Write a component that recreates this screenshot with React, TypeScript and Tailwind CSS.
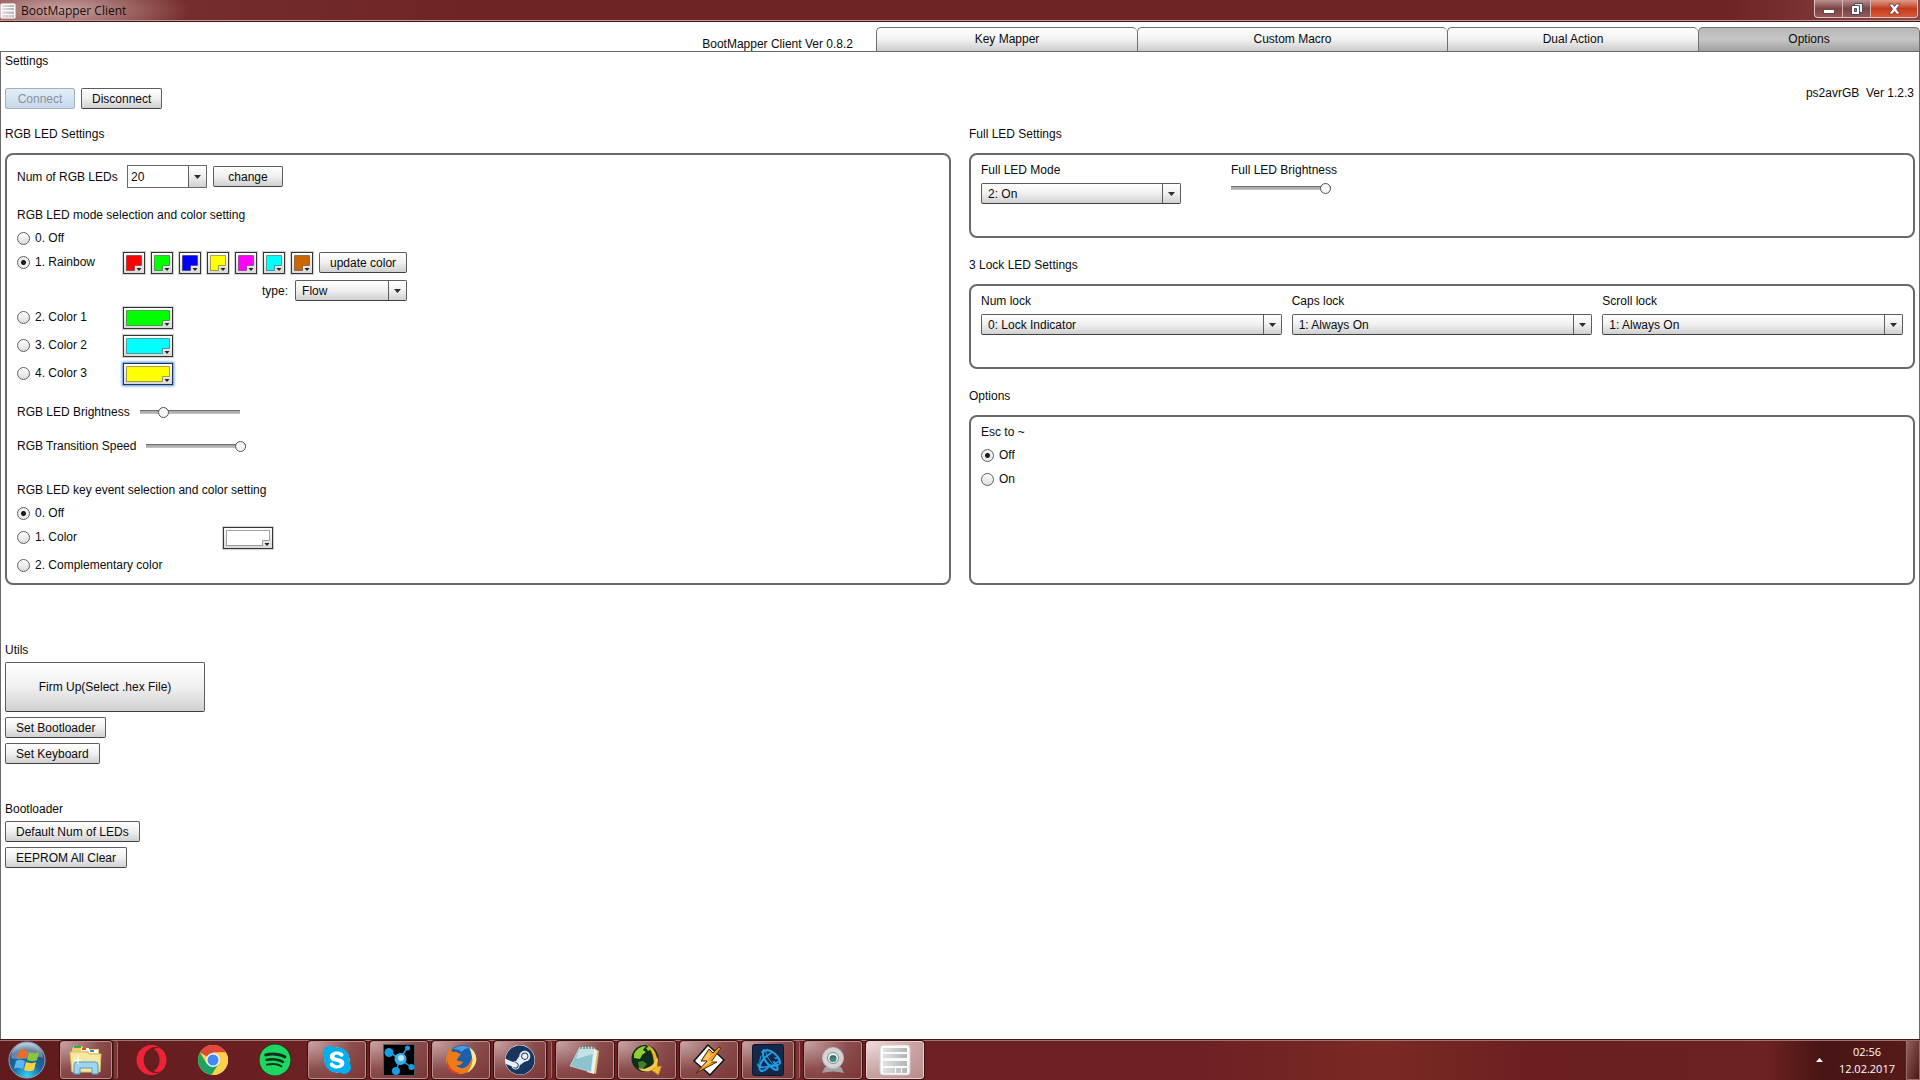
import React from "react"
import { FaOpera, FaSkype, FaSpotify, FaSteam } from "react-icons/fa"

const buttonClass =
  "h-[21px] min-w-[70px] px-[10px] rounded-[2px] border border-[#5c5d5e] border-b-[#3f3f3f] bg-linear-to-b from-white via-[#f0f0f0] to-[#d0d0d0] text-center disabled:border-[#a4b0bd] disabled:from-[#e4edf7] disabled:via-[#d6e4f3] disabled:to-[#c5d8ee] disabled:text-[#8a9099]"

function Button({ children, disabled = false }: { children: React.ReactNode; disabled?: boolean }) {
  return (
    <button className={buttonClass} disabled={disabled}>
      {children}
    </button>
  )
}

function Arrow() {
  return (
    <svg width="7" height="4" viewBox="0 0 7 4">
      <path d="M0 0h7L3.5 4z" fill="#2e2e2e" />
    </svg>
  )
}

function Select({ id, options, plain = false }: { id: string; options: string[]; plain?: boolean }) {
  return (
    <div
      className={
        plain
          ? "relative h-[23px] w-20 border border-[#696969] bg-white"
          : "relative h-[21px] w-full rounded-[2px] border border-[#5c5d5e] border-b-[#3f3f3f] bg-linear-to-b from-white via-[#f0f0f0] to-[#d0d0d0]"
      }
    >
      <select
        id={id}
        className={
          plain
            ? "block h-full w-full appearance-none bg-transparent pl-[3px] outline-none"
            : "block h-full w-full appearance-none bg-transparent pl-[6px] outline-none"
        }
      >
        {options.map((option) => (
          <option key={option}>{option}</option>
        ))}
      </select>
      <span className="pointer-events-none absolute inset-y-0 right-0 flex w-[18px] items-center justify-center border-l border-[#5c5d5e] bg-linear-to-b from-white via-[#f0f0f0] to-[#d0d0d0]">
        <Arrow />
      </span>
    </div>
  )
}

function Radio({ name, label, checked = false }: { name: string; label: string; checked?: boolean }) {
  return (
    <label className="flex h-5 items-center gap-[5px]">
      <input
        type="radio"
        name={name}
        defaultChecked={checked}
        className="h-[13px] w-[13px] appearance-none rounded-full border border-[#606162] bg-linear-to-b from-white to-[#dcdcdc] checked:bg-[radial-gradient(circle,#1c1c1c_2px,#eeeeee_3px)]"
      />
      {label}
    </label>
  )
}

function Slider({ id, value }: { id: string; value: number }) {
  return (
    <input
      id={id}
      type="range"
      defaultValue={value}
      className="h-4 w-[100px] appearance-none bg-[linear-gradient(#6f6f6f_1px,#a3a3a3_1px,#c4c4c4)] bg-[length:100%_4px] bg-center bg-no-repeat [&::-webkit-slider-thumb]:h-[11px] [&::-webkit-slider-thumb]:w-[11px] [&::-webkit-slider-thumb]:appearance-none [&::-webkit-slider-thumb]:rounded-full [&::-webkit-slider-thumb]:border [&::-webkit-slider-thumb]:border-[#555555] [&::-webkit-slider-thumb]:bg-[#f6f6f6]"
    />
  )
}

function Swatch({
  color,
  label,
  width = 50,
  focused = false,
}: {
  color: string
  label: string
  width?: number
  focused?: boolean
}) {
  const right = width - 3.5
  return (
    <button
      aria-label={label}
      className={focused ? "rounded-[1px] shadow-[0_0_0_1px_#8fb6e6,0_0_2px_2px_#a9c7ec]" : "shadow-[0_0_1px_1px_#d4d4d4]"}
    >
      <svg width={width} height="22" className="block">
        <defs>
          <linearGradient id="swatch-face" x2="0" y2="1">
            <stop offset="0" stopColor="#fff" />
            <stop offset="1" stopColor="#d8d8d8" />
          </linearGradient>
        </defs>
        <rect
          x=".5"
          y=".5"
          width={width - 1}
          height="21"
          fill="url(#swatch-face)"
          stroke={focused ? "#17325c" : "#333"}
        />
        <path d={`M3.5 3.5H${right}V13.5H${right - 7}V18.5H3.5z`} fill={color} />
        <path
          d={`M3.5 3.5H${right}V13.5H${right - 7}V18.5H3.5z`}
          fill="none"
          stroke="#000"
          strokeOpacity=".35"
        />
        <path d={`M${right - 5} 16h5l-2.5 3z`} fill="#222" />
      </svg>
    </button>
  )
}

function Section({ title, className = "", children }: { title: string; className?: string; children: React.ReactNode }) {
  return (
    <section className="flex flex-col gap-3">
      <h2>{title}</h2>
      <div className={`rounded-lg border-2 border-[#696969] px-[10px] ${className}`}>{children}</div>
    </section>
  )
}

const rainbow = ["#ff0000", "#00ff00", "#0000ff", "#ffff00", "#ff00ff", "#00ffff", "#cc6600"]

function RgbPanel() {
  return (
    <Section title="RGB LED Settings" className="pt-[10px] pb-2">
      <div className="flex items-center">
        <label htmlFor="led-count" className="w-[110px]">
          Num of RGB LEDs
        </label>
        <Select id="led-count" options={["20", "16", "12", "8"]} plain />
        <span className="ml-[6px] flex">
          <Button>change</Button>
        </span>
      </div>

      <h3 className="mt-5">RGB LED mode selection and color setting</h3>
      <div className="mt-[6px]">
        <Radio name="mode" label="0. Off" />
      </div>
      <div className="mt-1 grid w-fit grid-cols-[106px_auto] gap-y-[6px]">
        <Radio name="mode" label="1. Rainbow" checked />
        <div className="flex items-start gap-[6px]">
          {rainbow.map((color, i) => (
            <Swatch key={color} color={color} label={`Rainbow color ${i + 1}`} width={22} />
          ))}
          <Button>update color</Button>
        </div>
        <div className="col-start-2 flex items-center justify-end gap-[7px]">
          <label htmlFor="rainbow-type">type:</label>
          <div className="w-28">
            <Select id="rainbow-type" options={["Flow", "Fixed"]} />
          </div>
        </div>
        <Radio name="mode" label="2. Color 1" />
        <div className="flex">
          <Swatch color="#00ff00" label="Color 1" />
        </div>
        <Radio name="mode" label="3. Color 2" />
        <div className="flex">
          <Swatch color="#00ffff" label="Color 2" />
        </div>
        <Radio name="mode" label="4. Color 3" />
        <div className="flex">
          <Swatch color="#ffff00" label="Color 3" focused />
        </div>
      </div>

      <div className="mt-[19px] flex items-center gap-[10px]">
        <label htmlFor="rgb-brightness">RGB LED Brightness</label>
        <Slider id="rgb-brightness" value={20} />
      </div>
      <div className="mt-[18px] flex items-center gap-[10px]">
        <label htmlFor="rgb-speed">RGB Transition Speed</label>
        <Slider id="rgb-speed" value={100} />
      </div>

      <h3 className="mt-[29px]">RGB LED key event selection and color setting</h3>
      <div className="mt-[6px]">
        <Radio name="event" label="0. Off" checked />
      </div>
      <div className="mt-1 grid w-fit grid-cols-[206px_auto] gap-y-[6px]">
        <Radio name="event" label="1. Color" />
        <div className="flex">
          <Swatch color="#ffffff" label="Key event color" />
        </div>
        <Radio name="event" label="2. Complementary color" />
      </div>
    </Section>
  )
}

const locks = [
  { id: "num-lock", label: "Num lock", options: ["0: Lock Indicator", "1: Always On"] },
  { id: "caps-lock", label: "Caps lock", options: ["1: Always On", "0: Lock Indicator"] },
  { id: "scroll-lock", label: "Scroll lock", options: ["1: Always On", "0: Lock Indicator"] },
]

function RightPanels() {
  return (
    <div className="flex flex-col gap-5">
      <Section title="Full LED Settings" className="flex gap-[50px] pt-2 pb-8">
        <div className="flex w-[200px] flex-col gap-[6px]">
          <label htmlFor="full-mode">Full LED Mode</label>
          <Select id="full-mode" options={["2: On", "1: Fade", "0: Off"]} />
        </div>
        <div className="flex flex-col gap-[3px]">
          <label htmlFor="full-brightness">Full LED Brightness</label>
          <Slider id="full-brightness" value={100} />
        </div>
      </Section>
      <Section title="3 Lock LED Settings" className="grid grid-cols-3 gap-[10px] pt-2 pb-8">
        {locks.map((lock) => (
          <div key={lock.id} className="flex flex-col gap-[6px]">
            <label htmlFor={lock.id}>{lock.label}</label>
            <Select id={lock.id} options={lock.options} />
          </div>
        ))}
      </Section>
      <Section title="Options" className="flex h-[170px] flex-col pt-2">
        <h3>Esc to ~</h3>
        <div className="mt-[6px] flex flex-col gap-1">
          <Radio name="esc" label="Off" checked />
          <Radio name="esc" label="On" />
        </div>
      </Section>
    </div>
  )
}

function ClientIcon({ size }: { size: number }) {
  return (
    <svg width={size} height={size} viewBox="0 0 32 32">
      <defs>
        <linearGradient id="client-line">
          <stop offset="0" stopColor="#e2e2e2" />
          <stop offset="1" stopColor="#b4b4b4" />
        </linearGradient>
      </defs>
      <rect x="1" y="1" width="30" height="30" rx="3" fill="#fafafa" stroke="#d8caca" />
      <path d="M4 4h24v4H4zM4 10h24v4H4zM4 17h24v5H4zM4 24h12v5H4zM17 24h5v5h-5zM23 24h5v5h-5z" fill="url(#client-line)" />
    </svg>
  )
}

function TitleBar() {
  return (
    <header className="flex h-[22px] items-start justify-between border-b border-[#3d1212] bg-[radial-gradient(ellipse_130px_30px_at_60px_10px,#c9a5a4,transparent),linear-gradient(90deg,#7b3432,#6d2423_25%,#6e2423_90%,#8b4a49)] shadow-[inset_0_-1px_0_#c99a98]">
      <div className="flex h-full items-center gap-[5px]">
        <ClientIcon size={16} />
        <h1 className="font-['Open_Sans',sans-serif] text-xs text-[#160d0d]">BootMapper Client</h1>
      </div>
      <div className="mr-[2px] flex h-[18px] rounded-b border border-t-0 border-[#e0c1c1] bg-linear-to-b from-[#b99291] via-[#7c4444] to-[#8f5b5a]">
        <button aria-label="Minimize" className="flex w-7 items-center justify-center border-r border-[#d8b5b5]">
          <svg width="12" height="12">
            <rect x=".5" y="6.5" width="11" height="4" fill="#fff" stroke="#65484a" />
          </svg>
        </button>
        <button aria-label="Restore" className="flex w-7 items-center justify-center border-r border-[#d8b5b5]">
          <svg width="14" height="14">
            <path d="M4.5 1.5h8v9h-8z" fill="#eee" stroke="#4d4a58" />
            <path d="M1.5 3.5h8v9h-8z" fill="#fff" stroke="#4d4a58" />
            <path d="M4.5 6.5h2v3h-2z" fill="#a77" stroke="#4d4a58" />
          </svg>
        </button>
        <button
          aria-label="Close"
          className="flex w-[46px] items-center justify-center rounded-br bg-linear-to-b from-[#e09a8a] via-[#c23a1e] to-[#dc5a36]"
        >
          <svg width="13" height="12" viewBox="0 0 13 12">
            <path d="M1 1h3.5l2 2.5L8.5 1H12L8.500 6l3.500 5H8.500l-2-2.500-2 2.500H1l3.500-5z" fill="#fff" stroke="#5c3a44" strokeWidth=".8" />
          </svg>
        </button>
      </div>
    </header>
  )
}

const tabClass =
  "h-6 rounded-t-[5px] border border-b-0 border-r-0 border-[#6f6f6f] pb-[2px] text-center last:border-r bg-linear-to-b"

function TabBar() {
  return (
    <nav className="grid grid-cols-[876fr_1044fr] border-b border-[#696969] pt-[5px]">
      <p className="self-end pr-[23px] text-right">BootMapper Client Ver 0.8.2</p>
      <div className="grid grid-cols-[261fr_310fr_251fr_222fr]">
        <button className={`${tabClass} from-white via-[#f2f2f2] to-[#cccccc]`}>Key Mapper</button>
        <button className={`${tabClass} from-white via-[#f2f2f2] to-[#cccccc]`}>Custom Macro</button>
        <button className={`${tabClass} from-white via-[#f2f2f2] to-[#cccccc]`}>Dual Action</button>
        <button className={`${tabClass} from-[#b8b8b8] via-[#c6c6c6] to-[#a0a0a0]`}>Options</button>
      </div>
    </nav>
  )
}

function StartOrb() {
  return (
    <svg width="38" height="38" viewBox="0 0 38 38">
      <defs>
        <radialGradient id="orb" cx=".5" cy=".95" r=".9">
          <stop offset="0" stopColor="#35d4f4" />
          <stop offset=".45" stopColor="#166ba8" />
          <stop offset=".8" stopColor="#2c4f78" />
          <stop offset="1" stopColor="#9db4c8" />
        </radialGradient>
      </defs>
      <circle cx="19" cy="19" r="18" fill="url(#orb)" stroke="#8fa9bd" />
      <path d="M3 17a16 15 0 0 1 32 0c-8-4-22 4-32 0z" fill="#fff" opacity=".3" />
      <path d="M11 10c3-2 6-1 9 0l-2 8c-3-1-6-2-9 0z" fill="#ee6a2c" />
      <path d="M21 11c3 1 6 2 10 0l-2 8c-4 2-7 1-10 0z" fill="#8cc63f" />
      <path d="M8 20c3-2 6-1 9 0l-2 8c-3-1-6-2-9 0z" fill="#5cb8f5" />
      <path d="M18 21c3 1 6 2 10 0l-2 8c-4 2-7 1-10 0z" fill="#fdd23f" />
    </svg>
  )
}

function ExplorerIcon() {
  return (
    <svg width="34" height="32" viewBox="0 0 34 32">
      <path d="M3 5l2-3h8l2 3h15v22H3z" fill="#e9cf72" />
      <path d="M5 2h7v2H5z" fill="#2fb344" />
      <path d="M12 4h8v3h-8z" fill="#fff" />
      <path d="M13 4h4v2h-4z" fill="#d94b2b" />
      <path d="M20 6h9v3h-9z" fill="#fff" />
      <path d="M21 6h4v2h-4z" fill="#2f8ad0" />
      <path d="M1 8h17l2 2h12l-1 18H3z" fill="#f8e7a0" stroke="#dcc06a" />
      <path d="M5 30V21q0-3 3-3h18q3 0 3 3v9h-6v-6H11v6z" fill="#9fd3ee" stroke="#4d9ccc" />
      <path d="M9 11v9M5 16h8" stroke="#fff" />
    </svg>
  )
}

function OperaIcon() {
  return <FaOpera size={31} color="#ee2436" />
}

function ChromeIcon() {
  return (
    <svg width="30" height="30" viewBox="0 0 30 30">
      <circle cx="15" cy="15" r="15" fill="#fcd04b" />
      <path d="M15 15L2 7.5A15 15 0 0 1 28 7.5H15z" fill="#e0483c" />
      <path d="M2 7.5A15 15 0 0 0 13.5 29.9L21 18.5 15 15l-6.5 3.5z" fill="#1da261" />
      <path d="M28 7.5H15v7l6 4-7.5 11.4A15 15 0 0 0 28 7.5z" fill="#fcd04b" />
      <circle cx="15" cy="15" r="7" fill="#f3f3f3" />
      <circle cx="15" cy="15" r="5.5" fill="#4587f3" />
    </svg>
  )
}

function SpotifyIcon() {
  return (
    <span className="rounded-full bg-[#10301c]">
      <FaSpotify size={32} color="#1ed760" />
    </span>
  )
}

function SkypeIcon() {
  return (
    <span className="rounded-full bg-[radial-gradient(circle,white_55%,transparent_56%)]">
      <FaSkype size={32} color="#00aff0" />
    </span>
  )
}

function MoleculeIcon() {
  return (
    <svg width="32" height="32" viewBox="0 0 32 32">
      <rect x=".5" y=".5" width="31" height="31" fill="#000" stroke="#55555a" />
      <path d="M17 15L6 8M17 15L24 4M17 15l11 8M17 15l-4 12" stroke="#1b9be0" strokeWidth="1.5" />
      <circle cx="17.5" cy="15" r="6" fill="#35aef0" />
      <circle cx="18" cy="14" r="3" fill="#b8e6ff" />
      <circle cx="6" cy="8.5" r="4.5" fill="#1b9be0" />
      <circle cx="24.5" cy="4" r="2.5" fill="#1b9be0" />
      <circle cx="28.5" cy="23" r="3" fill="#1b9be0" />
      <circle cx="13" cy="27" r="4" fill="#1b9be0" />
    </svg>
  )
}

function FirefoxIcon() {
  return (
    <svg width="32" height="32" viewBox="0 0 32 32">
      <circle cx="17" cy="15" r="14" fill="#1d5fae" />
      <path d="M8 5q8-6 17-1-6 0-8 4-3-3-9-3z" fill="#4b9be0" />
      <path d="M28 7q5 10-1 17-5 6-12 6Q3 29 1 18 1 9 6 4q0 3 2 4 3-1 5 1l3 1-3 4q-2 2 0 3 3 0 5 1-2 4-7 3 4 5 10 2 6-4 7-16z" fill="#ef7a1a" />
      <path d="M24 3q9 6 7 15-2 7-9 11 7-9 5-16-1-6-3-10z" fill="#fbe98d" />
      <path d="M2 16q2 11 13 13-10 2-13-7z" fill="#d8431c" />
    </svg>
  )
}

function SteamIcon() {
  return (
    <span className="rounded-full bg-[#e9eef4]">
      <FaSteam size={30} color="#16365f" />
    </span>
  )
}

function NotepadIcon() {
  return (
    <svg width="32" height="30" viewBox="0 0 32 30">
      <path d="M25 3l5 3-3 23-5-2z" fill="#d3c07a" />
      <path d="M24 3l4 3-3 23-7-2z" fill="#eef1ee" />
      <path d="M11 2h14l-3 25L1 21z" fill="#8dc3cd" stroke="#c9e2e6" strokeWidth=".7" />
      <path d="M11 2h14l-1 7-17 5z" fill="#c2e2e6" />
      <path d="M12 1v3M15 1v3M18 1v3M21 1v3M24 1v3" stroke="#555" />
    </svg>
  )
}

function GlobeIcon() {
  return (
    <svg width="32" height="32" viewBox="0 0 32 32">
      <circle cx="14" cy="14.5" r="13.5" fill="#0f2c1c" />
      <path d="M3 10q4-8 12-8l-3 4 3 2-4 3-2 4-6-1zM15 4l4-2 2 3-4 2z" fill="#8fcf2f" />
      <path d="M7 18l5-1 4 3-4 5-4-1z" fill="#3f7f2a" />
      <path d="M16 1q11 4 10.500 21.500l4-.5-3 9-8-5.500 3.500-1Q24 9 16 1z" fill="#f3b92a" stroke="#b07a14" strokeWidth=".5" />
      <path d="M26 13q-2 9-13 12l-6-1q5 5 12 3 7-4 8-11z" fill="#f6cb4c" />
    </svg>
  )
}

function WinampIcon() {
  return (
    <svg width="32" height="32" viewBox="0 0 32 32">
      <path d="M15 1l16 15-14 15L1 17z" fill="#fff" stroke="#111" strokeWidth="1.5" />
      <path d="M16 5L8 17h6L3 29 24 18h-6L28 4l-2-1-6 6z" fill="#f79b1f" stroke="#4a2a05" />
      <path d="M16 7L10 16h6l-7 8 11-7h-6l8-9-5 4z" fill="#fdc66c" />
    </svg>
  )
}

function BattleIcon() {
  return (
    <svg width="32" height="32" viewBox="0 0 32 32">
      <rect x=".5" y=".5" width="31" height="31" rx="2" fill="#14284a" stroke="#0a1730" />
      <g fill="none" stroke="#1f9fe6" strokeLinecap="round">
        <path d="M12 6q-3 6 3 13t10 7q2-3-3-8" strokeWidth="2" />
        <path d="M10 8q6-4 12 1t6 10q-1 3-9 3" strokeWidth="2" />
        <path d="M19 9q-7 4-10 10t0 8q5 0 9-6" strokeWidth="2" />
        <path d="M6 20q-1 4 7 3t14-6q1-3-4-3" strokeWidth="1.5" />
        <path d="M15 5q-3 2 1 9t9 9" strokeWidth="1" />
        <path d="M9 12q-3 7 1 12" strokeWidth="1" />
      </g>
    </svg>
  )
}

function WebcamIcon() {
  return (
    <svg width="24" height="28" viewBox="0 0 24 28">
      <path d="M4 21h16l3 6q-11-3-22 0z" fill="#a5a0a0" />
      <circle cx="12" cy="12" r="10.5" fill="#d4d4d4" stroke="#bbb" />
      <circle cx="12" cy="12" r="5.5" fill="#f1f1f1" stroke="#888" />
      <circle cx="12" cy="12.5" r="3.5" fill="#2c8f8c" />
      <path d="M9 11h6" stroke="#804030" />
    </svg>
  )
}

const windowTile =
  "flex h-[38px] items-center justify-center rounded-[3px] border border-[#bd8e8e] bg-[radial-gradient(ellipse_at_top_left,#c9a6a6,#8b4d4d_55%,#7a3535)] shadow-[0_0_0_1px_#3a1010]"
const activeTile =
  "flex h-[38px] items-center justify-center rounded-[3px] border border-[#e8d2d2] bg-[radial-gradient(ellipse_at_top_left,#ecdcdc,#c9a3a3_60%,#b98a8a)] shadow-[0_0_0_1px_#3a1010]"
const pinnedTile = "flex h-[38px] items-center justify-center"

const apps = [
  { name: "Explorer", icon: <ExplorerIcon />, kind: "stack" },
  { name: "Opera", icon: <OperaIcon />, kind: "pinned" },
  { name: "Chrome", icon: <ChromeIcon />, kind: "pinned" },
  { name: "Spotify", icon: <SpotifyIcon />, kind: "pinned" },
  { name: "Skype", icon: <SkypeIcon />, kind: "window" },
  { name: "Molecule", icon: <MoleculeIcon />, kind: "window" },
  { name: "Firefox", icon: <FirefoxIcon />, kind: "window" },
  { name: "Steam", icon: <SteamIcon />, kind: "stack" },
  { name: "Notepad", icon: <NotepadIcon />, kind: "window" },
  { name: "JDownloader", icon: <GlobeIcon />, kind: "window" },
  { name: "Winamp", icon: <WinampIcon />, kind: "window" },
  { name: "Battle.net", icon: <BattleIcon />, kind: "stack" },
  { name: "Webcam", icon: <WebcamIcon />, kind: "window" },
  { name: "BootMapper Client", icon: <ClientIcon size={32} />, kind: "active" },
]

function Tile({ name, icon, kind }: { name: string; icon: React.ReactNode; kind: string }) {
  if (kind === "stack") {
    return (
      <div className="flex h-[38px] w-[58px] gap-[2px]">
        <button aria-label={name} className={`${windowTile} w-[52px]`}>
          {icon}
        </button>
        <span className="flex-1 rounded-r-[3px] border-r border-[#a06a6a] bg-[#7a3535]" />
      </div>
    )
  }
  const tile = kind === "active" ? activeTile : kind === "window" ? windowTile : pinnedTile
  return (
    <button aria-label={name} className={`${tile} w-[58px]`}>
      {icon}
    </button>
  )
}

function Taskbar() {
  return (
    <footer className="flex h-[41px] items-stretch border-t border-[#3b1a1a] bg-[linear-gradient(90deg,#5f1b1d,#6b2022_15%,#6d2024_62%,#792a22_72%,#6b1f20_80%,#6c2220_92%,#481415_95%,#571c19)] font-['Open_Sans',sans-serif] shadow-[inset_0_1px_0_#a37373]">
      <button aria-label="Start" className="flex w-[60px] items-center pl-2">
        <StartOrb />
      </button>
      <div className="flex flex-1 gap-1 pt-px">
        {apps.map((app) => (
          <Tile key={app.name} {...app} />
        ))}
      </div>
      <div className="flex items-center text-[11px] leading-[17px] text-white">
        <button aria-label="Show hidden icons" className="mr-3 p-1">
          <svg width="7" height="4" viewBox="0 0 7 4" className="block">
            <path d="M3.5 0L7 4H0z" fill="#fff" />
          </svg>
        </button>
        <div className="mr-[11px] text-center">
          <p>02:56</p>
          <p>12.02.2017</p>
        </div>
        <button
          aria-label="Show desktop"
          className="h-full w-[14px] border border-[#9b6a6a] bg-linear-to-br from-[#94605f] to-[#4c1717]"
        />
      </div>
    </footer>
  )
}

export default function App() {
  return (
    <div className="flex min-h-screen flex-col bg-white font-['Liberation_Sans',Arial,sans-serif] text-xs leading-[14px] text-[#0b0b0b]">
      <TitleBar />
      <TabBar />
      <main className="flex-1 border-x border-[#696969] px-1 pt-[2px]">
        <h2>Settings</h2>
        <div className="mt-[18px] flex items-start justify-between">
          <div className="flex gap-[6px] pt-[2px]">
            <Button disabled>Connect</Button>
            <Button>Disconnect</Button>
          </div>
          <p className="pr-px whitespace-pre">ps2avrGB  Ver 1.2.3</p>
        </div>

        <div className="mt-[18px] grid grid-cols-2 gap-[18px]">
          <RgbPanel />
          <RightPanels />
        </div>

        <section className="mt-[58px] flex flex-col items-start gap-[5px]">
          <h2>Utils</h2>
          <button className="h-[50px] w-[200px] rounded-[2px] border border-[#5c5d5e] border-b-[#3f3f3f] bg-linear-to-b from-white via-[#f0f0f0] to-[#d0d0d0]">
            Firm Up(Select .hex File)
          </button>
          <Button>Set Bootloader</Button>
          <Button>Set Keyboard</Button>
        </section>
        <section className="mt-[38px] flex flex-col items-start gap-[5px]">
          <h2>Bootloader</h2>
          <Button>Default Num of LEDs</Button>
          <Button>EEPROM All Clear</Button>
        </section>
      </main>
      <Taskbar />
    </div>
  )
}
